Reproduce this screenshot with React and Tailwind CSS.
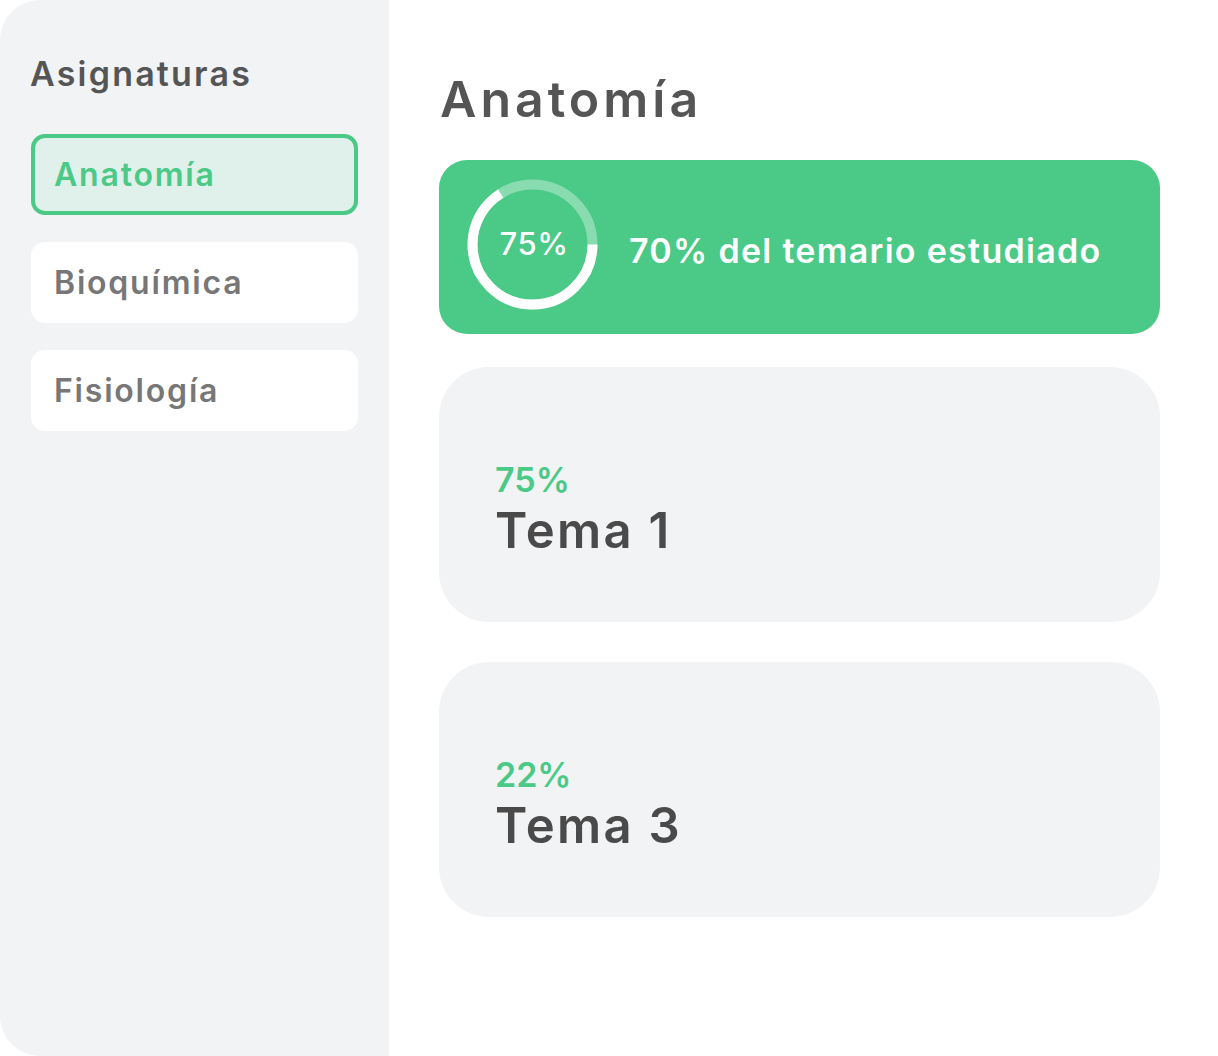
import React from 'react';

const subjects = [
  { name: 'Anatomía', active: true },
  { name: 'Bioquímica', active: false },
  { name: 'Fisiología', active: false },
];

const temas = [
  { name: 'Tema 1', pct: '75%' },
  { name: 'Tema 3', pct: '22%' },
];

const font = { fontFamily: 'Inter, "Open Sans", sans-serif' };

const ProgressRing = ({ value = 66 }) => {
  const r = 60;
  const c = 2 * Math.PI * r;
  return (
    <div className="relative w-[131px] h-[131px] shrink-0 mb-[5px]">
      <svg width="131" height="131" viewBox="0 0 131 131">
        <circle cx="65.5" cy="65.5" r={r} fill="none" stroke="#ffffff" strokeOpacity="0.35" strokeWidth="10" />
        <circle
          cx="65.5"
          cy="65.5"
          r={r}
          fill="none"
          stroke="#ffffff"
          strokeWidth="10"
          strokeDasharray={`${(c * value) / 100} ${c}`}
        />
      </svg>
      <span className="absolute inset-0 flex items-center justify-center text-white text-[31px] font-medium tracking-[0.5px] pl-[3px]">
        75%
      </span>
    </div>
  );
};

const App = () => {
  return (
    <div style={font} className="w-[1218px] h-[1056px] rounded-[40px] overflow-hidden flex bg-white">
      <aside className="w-[389px] shrink-0 bg-[#f2f3f5] px-[31px] pt-[52px]">
        <h2 className="text-[34px] leading-[44px] font-semibold text-[#555555] tracking-[2.2px] -ml-px">Asignaturas</h2>
        <div className="mt-[38px] flex flex-col gap-[27px]">
          {subjects.map((s) => (
            <div
              key={s.name}
              className={`h-[81px] rounded-[14px] flex items-center text-[32px] font-semibold tracking-[1.8px] ${
                s.active
                  ? 'border-4 border-[#4bc986] bg-[#e0f0ea] text-[#4bc986] pl-[19px]'
                  : 'bg-white text-[#777777] pl-[23px]'
              }`}
            >
              {s.name}
            </div>
          ))}
        </div>
      </aside>

      <main className="flex-1 pl-[50px] pr-[58px] pt-[69px]">
        <h1 className="text-[50px] leading-[60px] font-semibold text-[#555555] tracking-[4px] ml-[1px]">Anatomía</h1>

        <div className="mt-[31px] h-[174px] rounded-[28px] bg-[#4bc986] flex items-center pl-[28px] gap-[31px]">
          <ProgressRing value={66} />
          <span className="text-white text-[34px] font-semibold tracking-[1.3px] pt-[7px]">70% del temario estudiado</span>
        </div>

        <div className="mt-[33px] flex flex-col gap-[40px]">
          {temas.map((t) => (
            <div key={t.name} className="h-[255px] rounded-[50px] bg-[#f2f3f5] pl-[56px] pt-[93px]">
              <div className="text-[34px] leading-[40px] font-semibold text-[#4bc986]">{t.pct}</div>
              <div className="mt-[3px] text-[49px] leading-[56px] font-semibold text-[#4a4a4a] tracking-[2.3px]">{t.name}</div>
            </div>
          ))}
        </div>
      </main>
    </div>
  );
};

export default App;
